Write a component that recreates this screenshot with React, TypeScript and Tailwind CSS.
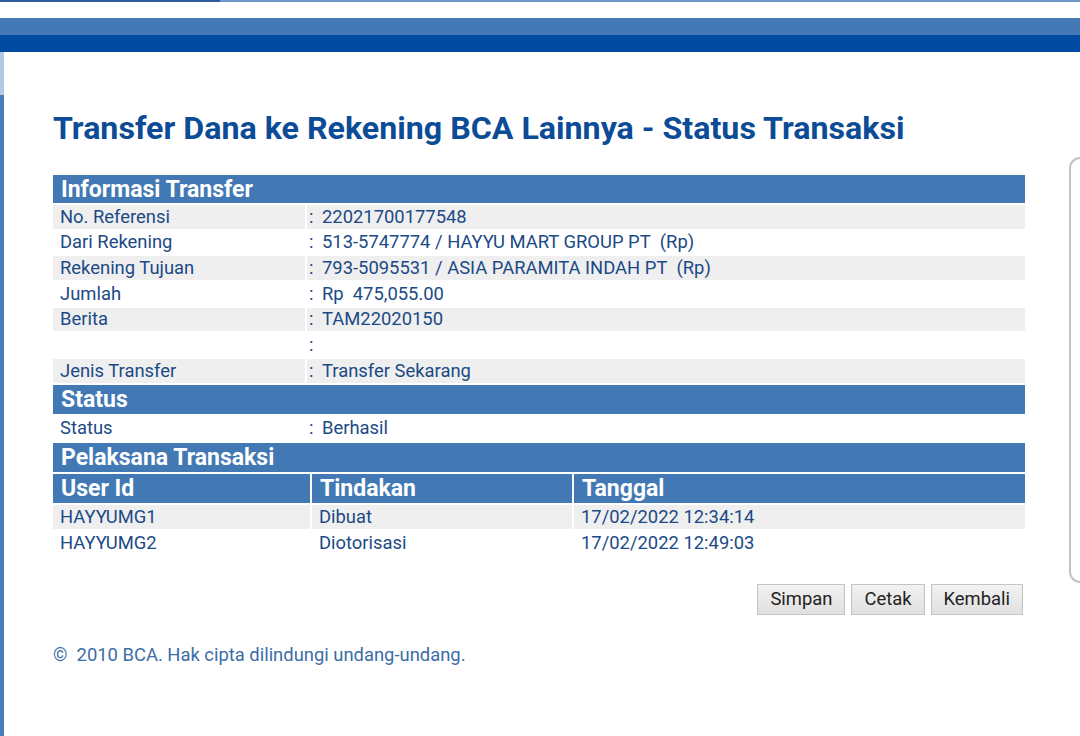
const infoRows = [
  { label: "No. Referensi", value: "22021700177548" },
  { label: "Dari Rekening", value: "513-5747774 / HAYYU MART GROUP PT\u00a0\u00a0(Rp)" },
  { label: "Rekening Tujuan", value: "793-5095531 / ASIA PARAMITA INDAH PT\u00a0\u00a0(Rp)" },
  { label: "Jumlah", value: "Rp\u00a0\u00a0475,055.00" },
  { label: "Berita", value: "TAM22020150" },
  { label: "", value: "" },
  { label: "Jenis Transfer", value: "Transfer Sekarang" },
];

const actors = [
  { user: "HAYYUMG1", action: "Dibuat", date: "17/02/2022 12:34:14" },
  { user: "HAYYUMG2", action: "Diotorisasi", date: "17/02/2022 12:49:03" },
];

function SectionHeader({ title, tall }: { title: string; tall?: boolean }) {
  return (
    <div
      className={`flex items-center bg-[#4279b5] pl-[8px] text-[23px] font-bold leading-none text-white ${
        tall ? "h-[29px]" : "h-[28px]"
      }`}
    >
      {title}
    </div>
  );
}

function InfoRow({ label, value, shaded, tall }: { label: string; value: string; shaded: boolean; tall?: boolean }) {
  const bg = shaded ? "bg-[#efefef]" : "bg-white";
  return (
    <div
      className={`grid grid-cols-[252px_1fr] gap-x-[2px] text-[18.4px] leading-none text-[#1b4a86] ${
        tall ? "h-[25px]" : "h-[23.7px]"
      }`}
    >
      <div className={`flex items-center pl-[7px] ${bg}`}>{label}</div>
      <div className={`flex items-center pl-[2px] ${bg}`}>
        <span className="w-[13px]">:</span>
        <span>{value}</span>
      </div>
    </div>
  );
}

function Button({ label }: { label: string }) {
  return (
    <button className="h-[31px] border border-[#c4c4c4] bg-gradient-to-b from-[#f2f2f2] to-[#e0e0e0] px-[12px] text-[18.4px] leading-none text-[#222]">
      {label}
    </button>
  );
}

export default function App() {
  return (
    <div className="flex h-[736px] w-full flex-col overflow-hidden bg-white font-['Roboto',sans-serif]">
      <div className="flex h-[2px]">
        <div className="w-[220px] bg-[#2d5d9c]" />
        <div className="flex-1 bg-[#6f97c8]" />
      </div>
      <div className="h-[16px]" />
      <div className="h-[17px] bg-[#4479b5]" />
      <div className="h-[17px] bg-[#004aa1]" />

      <div className="flex flex-1">
        <div className="flex w-[4px] flex-col">
          <div className="h-[43px] bg-[#b3c8e2]" />
          <div className="flex-1 bg-[#4a7db8]" />
        </div>

        <div className="flex-1 pl-[49px] pt-[58px]">
          <h1 className="h-[36px] whitespace-nowrap text-[32.2px] font-bold leading-[36px] text-[#0c4b96]">
            Transfer Dana ke Rekening BCA Lainnya - Status Transaksi
          </h1>

          <div className="mt-[29px] flex w-[972px] flex-col gap-[2px]">
            <SectionHeader title="Informasi Transfer" />
            {infoRows.map((r, i) => (
              <InfoRow key={i} label={r.label} value={r.value} shaded={i % 2 === 0} />
            ))}
            <SectionHeader title="Status" tall />
            <InfoRow label="Status" value="Berhasil" shaded={false} tall />
            <SectionHeader title="Pelaksana Transaksi" tall />
            <div className="grid h-[29px] grid-cols-[257px_260px_1fr] gap-x-[2px] text-[23px] font-bold leading-none text-white">
              <div className="flex items-center bg-[#4279b5] pl-[8px]">User Id</div>
              <div className="flex items-center bg-[#4279b5] pl-[8px]">Tindakan</div>
              <div className="flex items-center bg-[#4279b5] pl-[8px]">Tanggal</div>
            </div>
            {actors.map((a, i) => {
              const bg = i % 2 === 0 ? "bg-[#efefef]" : "bg-white";
              return (
                <div
                  key={a.user}
                  className="grid h-[24px] grid-cols-[257px_260px_1fr] gap-x-[2px] text-[18.4px] leading-none text-[#1b4a86]"
                >
                  <div className={`flex items-center pl-[7px] ${bg}`}>{a.user}</div>
                  <div className={`flex items-center pl-[7px] ${bg}`}>{a.action}</div>
                  <div className={`flex items-center pl-[7px] ${bg}`}>{a.date}</div>
                </div>
              );
            })}
          </div>

          <div className="mt-[29px] flex w-[970px] justify-end gap-[6px]">
            <Button label="Simpan" />
            <Button label="Cetak" />
            <Button label="Kembali" />
          </div>

          <p className="mt-[29px] text-[18.4px] leading-[22px] text-[#3b6da7]">
            ©&nbsp;&nbsp;2010 BCA. Hak cipta dilindungi undang-undang.
          </p>
        </div>

        <div className="mt-[105px] h-[426px] w-[11px] shrink-0 rounded-l-[12px] border-y-2 border-l-2 border-[#c2c2c2]" />
      </div>
    </div>
  );
}
